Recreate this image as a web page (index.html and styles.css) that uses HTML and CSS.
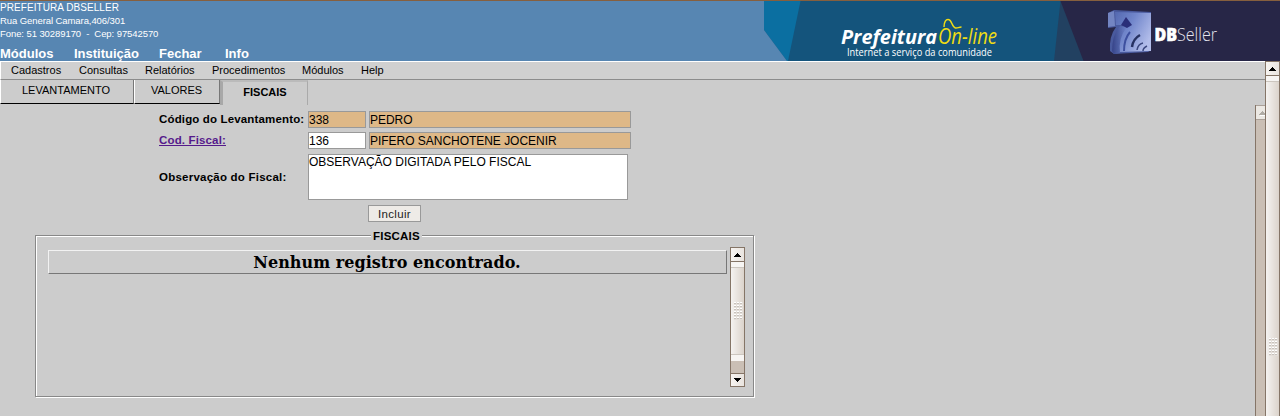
FILE: index.html
```html
<!DOCTYPE html>
<html lang="pt-BR">
<head>
<meta charset="utf-8">
<title>DBSeller - Prefeitura On-line</title>
<link rel="stylesheet" href="styles.css">
</head>
<body>
<header class="header">
  <div class="header-info">
    <div class="address">
      <div><span class="a1">PREFEITURA DBSELLER</span></div>
      <div><span class="a2">Rua General Camara,406/301</span></div>
      <div><span class="a3">Fone: 51 30289170&nbsp; -&nbsp; Cep: 97542570</span></div>
    </div>
    <nav class="main-nav"><a class="n1">Módulos</a><a class="n2">Instituição</a><a class="n3">Fechar</a><a>Info</a></nav>
  </div>
  <svg class="banner" width="516" height="60" viewBox="764 1 516 60">
    <defs>
      <linearGradient id="cube" x1="0" y1="0" x2="1" y2=".6">
        <stop offset="0" stop-color="#5468b0"/><stop offset=".45" stop-color="#7186cb"/><stop offset="1" stop-color="#b2bdea"/>
      </linearGradient>
      <linearGradient id="side" x1="0" y1="0" x2="1" y2="0">
        <stop offset="0" stop-color="#354388"/><stop offset="1" stop-color="#6f83ca"/>
      </linearGradient>
      <filter id="soft"><feGaussianBlur stdDeviation=".6"/></filter>
    </defs>
    <path fill="#14547c" d="M764 1h516v60H764z"/>
    <path fill="#0b6fa1" d="M764 1h36.500L788 61h-1L764 30z"/>
    <path fill="#5786b2" d="M764 30l23 31h-23z"/>
    <path fill="#224161" d="M1060.500 1L1054 61h40V1z"/>
    <path fill="#272647" d="M1060.500 1H1280v60H1083.500z"/>
    <text class="logo-name" x="841" y="44" textLength="96" lengthAdjust="spacingAndGlyphs">Prefeitura</text>
    <text class="logo-online" x="938" y="44" textLength="59" lengthAdjust="spacingAndGlyphs">On-line</text>
    <path d="M944 27c0-5 2-8 4.500-7.500 3.500 .500 3.500 8 7 8.500 2.500 .300 3-1 6-1" fill="none" stroke="#f0dc14" stroke-width="1.500"/>
    <text class="logo-sub" x="847" y="55.500" textLength="145" lengthAdjust="spacingAndGlyphs">Internet a serviço da comunidade</text>
    <g filter="url(#soft)">
      <path fill="#4a5a9e" d="M1108 13l6-3 37 2v38l-3 2-34 2-4-3q-1-15 6-24l-8 1z"/>
      <path fill="url(#cube)" d="M1115 12l36 1v38l-32 1q-6-16 6-27h-9z"/>
      <path fill="url(#side)" d="M1112 51q0-16 8-25l7 1q-9 11-7 26l-6 1z"/>
      <path fill="#7385c2" d="M1108 13l6-2 1 15-7 1z"/>
      <path fill="#2b2f79" d="M1126 17l6 8-5 3-6-3z"/>
      <path fill="none" stroke="#3e509f" stroke-width="2" d="M1124 51q0-12 6-19"/>
      <path fill="none" stroke="#263162" stroke-width="2.500" d="M1132 47q1-8 8-12"/>
      <path fill="none" stroke="#3a477f" stroke-width="1.500" d="M1137 50q1-6 6-7M1143 51q0-3 4-5"/>
    </g>
    <text class="brand-db" x="1154.500" y="40.500" textLength="22.500" lengthAdjust="spacingAndGlyphs">DB</text>
    <text class="brand-seller" x="1177" y="40.500" textLength="40" lengthAdjust="spacingAndGlyphs">Seller</text>
  </svg>
</header>
<div class="window">
  <main class="page">
    <nav class="menu"><a class="m1">Cadastros</a><a class="m2">Consultas</a><a class="m3">Relatórios</a><a class="m4">Procedimentos</a><a class="m5">Módulos</a><a>Help</a></nav>
    <div class="tabs">
      <div class="tab tab-lev"><span>LEVANTAMENTO</span></div>
      <div class="tab tab-val"><span>VALORES</span></div>
      <div class="tab-active">FISCAIS</div>
    </div>
    <div class="frame">
      <div class="content">
        <div class="row">
          <span class="label">Código do Levantamento:</span>
          <span class="field code locked">338</span><span class="field name locked">PEDRO</span>
        </div>
        <div class="row">
          <span class="label"><a class="link">Cod. Fiscal:</a></span>
          <span class="field code">136</span><span class="field name locked">PIFERO SANCHOTENE JOCENIR</span>
        </div>
        <div class="row row-obs">
          <span class="label label-obs">Observação do Fiscal:</span>
          <span class="area">OBSERVAÇÃO DIGITADA PELO FISCAL</span>
        </div>
        <button class="submit">Incluir</button>
        <fieldset class="group">
          <legend>FISCAIS</legend>
          <div class="list">
            <div class="empty">Nenhum registro encontrado.</div>
            <div class="scroll">
              <div class="arrow"><svg width="7" height="4" viewBox="0 0 7 4"><path d="M3 0h1v1h1v1h1v1h1v1H0V3h1V2h1V1h1z"/></svg></div>
              <div class="thumb thumb-list"><i class="grip"></i></div>
              <div class="track"></div>
              <div class="arrow down"><svg width="7" height="4" viewBox="0 0 7 4"><path d="M0 0h7v1H6v1H5v1H4v1H3V3H2V2H1V1H0z"/></svg></div>
            </div>
          </div>
        </fieldset>
      </div>
      <div class="inner-scroll">
        <div class="arrow-off"><svg width="7" height="5" viewBox="0 0 7 5"><path fill="#fff" d="M1 4h6v1H1z"/><path fill="#b0aca5" d="M3 0h1v1h1v1h1v1h1v1H0V3h1V2h1V1h1z"/></svg></div>
      </div>
    </div>
  </main>
  <div class="scroll">
    <div class="arrow"><svg width="7" height="4" viewBox="0 0 7 4"><path d="M3 0h1v1h1v1h1v1h1v1H0V3h1V2h1V1h1z"/></svg></div>
    <div class="thumb thumb-page"><i class="grip"></i></div>
  </div>
</div>
</body>
</html>
```
FILE: styles.css
```css
* { box-sizing: border-box; }
body { margin: 0; width: 1280px; height: 416px; overflow: hidden; background: #ccc; color: #000; font-family: "Liberation Sans", Arial, sans-serif; }

.header { display: flex; height: 61px; border-top: 1px solid #865f3e; background: #5786b2; color: #fff; }
.header-info { width: 764px; }
.address { height: 44px; font-size: 10px; line-height: 13px; }
.a1 { letter-spacing: .06px; }
.a2, .a3 { font-size: 9.500px; letter-spacing: -.08px; }
.main-nav { display: flex; font-weight: bold; font-size: 13px; line-height: 17px; }
.n1 { width: 74px; }
.n2 { width: 85px; }
.n3 { width: 66px; }
.banner { display: block; }
.logo-name { font: italic bold 20px "Open Sans", sans-serif; fill: #fff; }
.logo-online { font: italic 21px "Open Sans", sans-serif; fill: #f0dc14; }
.logo-sub { font: 10px "Open Sans", sans-serif; fill: #fff; }
.brand-db { font: 800 17px "Open Sans", sans-serif; fill: #fff; stroke: #fff; stroke-width: .6px; }
.brand-seller { font: 300 18px "Open Sans", sans-serif; fill: #e4e4ee; }

.window { display: flex; height: 355px; }
.page { width: 1265px; }
.menu { display: flex; height: 19px; padding-left: 10px; border-top: 1px solid #fff; border-left: 1px solid #fff; border-bottom: 1px solid #8c8c8c; background: #d0d0d0; font-size: 11px; line-height: 17px; }
.m1 { width: 68px; }
.m2 { width: 66px; }
.m3 { width: 67px; }
.m4 { width: 90px; }
.m5 { width: 59px; }

.tabs { display: flex; height: 25px; font-size: 11px; }
.tab { height: 24px; border-left: 1px solid #fff; border-right: 1px solid #777; border-bottom: 1px solid #000; line-height: 21px; text-align: center; }
.tab-lev { width: 134px; padding-right: 2px; }
.tab-val { width: 86px; padding-right: 1px; }
.tab-active { width: 88px; border-top: 2px solid #bbb; border-left: 3px solid #a8a8a8; border-right: 1px solid #aaa; font-weight: bold; line-height: 21px; text-align: center; }

.frame { display: flex; height: 311px; }
.content { width: 1255px; padding-top: 6px; }
.row { display: flex; align-items: center; height: 17px; margin-bottom: 4px; padding-left: 159px; font-size: 12px; }
.label { width: 149px; padding-bottom: 1px; font-weight: bold; font-size: 11.500px; letter-spacing: .15px; white-space: nowrap; }
.label-obs { letter-spacing: .23px; }
.link { color: #551a8b; text-decoration: underline; }
.field { height: 17px; border: 1px solid #999; background: #fff; line-height: 17px; white-space: nowrap; font-size: 12px; letter-spacing: -.03px; }
.code { width: 58px; margin-right: 3px; }
.name { width: 262px; }
.locked { background: #deb887; }
.row-obs { height: 46px; margin: 5px 0; }
.area { width: 320px; height: 46px; border: 1px solid #999; background: #fff; font-size: 12px; line-height: 15px; }
.submit { display: block; width: 53px; height: 17px; margin: 0 0 0 368px; padding: 0; border: 1px solid #999; background: #eeebe7; color: #222; font: 11.500px/17px "Liberation Sans", Arial, sans-serif; letter-spacing: .3px; }

.group { width: 719px; height: 167px; margin: 8px 0 0 35px; padding: 0 8px 0 12px; border: 1px solid #888; box-shadow: 1px 1px #fff, inset 1px 1px #fff; }
.group legend { height: 11px; margin: 0 auto; padding: 0 2px; background: #ccc; font-weight: bold; font-size: 11.500px; line-height: 13px; letter-spacing: .2px; }
.list { display: flex; justify-content: space-between; padding-top: 6px; }
.empty { width: 679px; height: 24px; margin-top: 3px; padding-right: 1px; border: 1px solid #f2f2f2; border-right-color: #777; border-bottom-color: #777; font: bold 16px/24px "DejaVu Serif", serif; letter-spacing: .04px; text-align: center; }

.scroll { width: 15px; }
.arrow { display: flex; align-items: center; justify-content: center; height: 15px; border: 1px solid #857567; background: linear-gradient(90deg, #f7f4f1, #e9e4df); }
.thumb { position: relative; border: solid #857567; border-width: 0 1px; background: linear-gradient(90deg, #f5f3f1, #dbd3cb); }
.thumb::before { content: ""; display: block; height: 5px; border-bottom: 1px solid #ccc6bf; background: #f7f5f3; }
.thumb-list { height: 97px; }
.thumb-list::after { content: ""; display: block; height: 6px; margin-top: 86px; border-top: 1px solid #ccc6bf; background: #f7f5f3; }
.track { height: 14px; border: 1px solid #857567; border-bottom: 0; background: #cabfb5; }
.down { height: 14px; }
.grip { position: absolute; left: 3px; top: 40px; width: 9px; height: 18px; background: repeating-linear-gradient(90deg, transparent 0 2px, #e4dfda 2px 3px), repeating-linear-gradient(#fff 0 1px, #c8c2bc 1px 2px, #e4dfda 2px 3px); }
.thumb-page { height: 340px; }
.thumb-page .grip { top: 262px; }
.inner-scroll { width: 10px; height: 311px; border-left: 1px solid #857567; background: #cabfb5; }
.arrow-off { height: 15px; padding: 5px 0 0 3px; overflow: hidden; border: 1px solid #aaa098; border-width: 1px 0; background: #ebe8e3; line-height: 0; }
```
